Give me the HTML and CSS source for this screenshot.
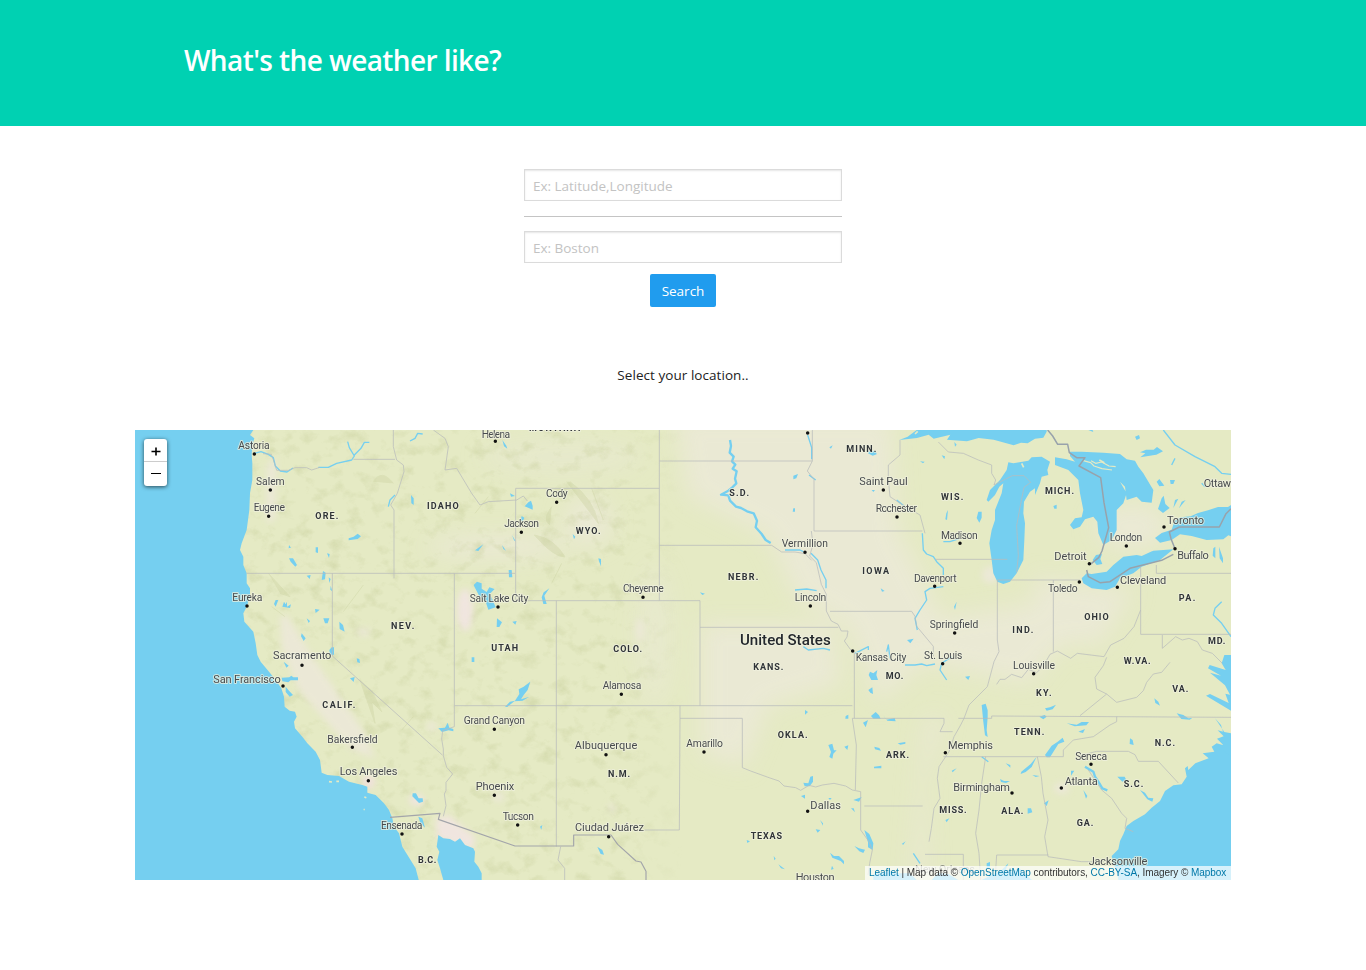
FILE: index.html
```html
<!DOCTYPE html>
<html lang="en">
<head>
<meta charset="utf-8">
<title>What's the weather like?</title>
<link rel="stylesheet" href="styles.css">
</head>
<body>
<header class="hero"><h1 class="title">What's the weather like?</h1></header>
<main>
<form class="search">
  <input class="input" type="text" placeholder="Ex: Latitude,Longitude" aria-label="Coordinates">
  <hr class="rule">
  <input class="input" type="text" placeholder="Ex: Boston" aria-label="City">
  <button class="button" type="button">Search</button>
</form>
<p class="status"><span>Select your location..</span></p>
<section class="map">
<svg class="canvas" viewBox="0 0 3288 1350" width="1096" height="450">
<defs>
<filter id="soft" x="-30%" y="-30%" width="160%" height="160%"><feGaussianBlur stdDeviation="32"/></filter>
<filter id="small" x="-30%" y="-30%" width="160%" height="160%"><feGaussianBlur stdDeviation="9"/></filter>
<filter id="relief" x="0" y="0" width="100%" height="100%" color-interpolation-filters="sRGB"><feTurbulence type="fractalNoise" baseFrequency=".019 .024" numOctaves="5" seed="21"/><feColorMatrix values="0 0 0 0 .76  0 0 0 0 .79  0 0 0 0 .58  2.6 0 0 0 -1.35"/></filter>
<linearGradient id="fade"><stop offset="0" stop-color="#fff"/><stop offset=".44" stop-color="#fff"/><stop offset=".5" stop-color="#000"/></linearGradient>
<mask id="west"><rect width="3288" height="1350" fill="url(#fade)"/></mask>
</defs>
<rect width="3288" height="1350" fill="#e5eac4"/>
<g fill="#eae9d4" filter="url(#soft)">
<path d="M1620-40H2270L2290 300L2420 560L2700 520L2820 600L2680 760L2370 700L2230 820L2140 590L1980 500L1900 320L1660 200Z"/>
<path d="M2700 440L3000 480L2900 640L2690 650Z"/><path d="M1700 580H2090L2120 760L1900 830L1830 1010L1700 970Z"/>
<ellipse cx="1560" cy="620" rx="50" ry="210" opacity=".6"/><ellipse cx="2990" cy="290" rx="110" ry="70"/>
<ellipse cx="1090" cy="350" rx="210" ry="35"/><ellipse cx="1360" cy="275" rx="70" ry="70"/>
<path d="M2370 860L2430 860L2370 1060L2380 1350H2330L2350 1050Z" opacity=".8"/><ellipse cx="1280" cy="80" rx="240" ry="50" opacity=".5"/>
</g>
<g mask="url(#west)"><rect width="3288" height="1350" filter="url(#relief)" opacity=".42"/></g>
<g fill="#ebe8d6" filter="url(#small)">
<path d="M435 560L455 555L540 690L690 910L720 985L650 960L490 780L440 650Z"/><path d="M395 105L425 80L420 270L395 280Z"/>
<ellipse cx="990" cy="540" rx="24" ry="64" fill="#f0e5df"/><path d="M903 1165L940 1155L1020 1220L1015 1260L905 1225Z" fill="#f0e5df"/>
<ellipse cx="700" cy="1055" rx="20" ry="22" fill="#f0e1dc"/><ellipse cx="845" cy="1110" rx="22" ry="18" fill="#f0e5df"/>
<ellipse cx="2565" cy="435" rx="24" ry="26"/><ellipse cx="1515" cy="600" rx="13" ry="36"/><ellipse cx="685" cy="606" rx="22" ry="12"/><ellipse cx="890" cy="890" rx="14" ry="14"/><ellipse cx="1090" cy="1100" rx="18" ry="15"/><ellipse cx="1431" cy="1135" rx="10" ry="14"/><ellipse cx="2780" cy="1075" rx="24" ry="18"/>
</g>
<g class="ridge">
<path d="M1305 155q70 50 85 125q-45-60-95-125M1198 315q60 10 92 66q-35 0-92-66M1250 230q-30 40-5 55M710 780l30 65l-30-30l10 65l-45-130M835 860l-35 40M715 155q25-40 60 5M400 430l65 70l-30-10M380 1010l60 45M1370 175l35 95M625 545l60-80M450 560l-40-30M1060 200l-40 50M1280 400l-30 60"/>
</g>
<g class="water">
<path d="M0 0H355l-10 15l13 10l-6 20l-2 30l2 25v50l-7 40l-2 50l-8 60l-15 40l-5 20l10 20v25l10 25v30l10 15v25l-10 30l-10 20l3 25l27 30l7 35l5 35l10 20l25 30l20 25l17 25l8 25l2 30l15 12l16 3l5 15l-8 15l3 20l22 25l15 20l25 25l13 25l5 38l17 7l35 3l30 17l40 10l15 5v18l25 7l25 25l15 20l10 25l5 25l15 20l10 40l40 65l13 50H0Z"/>
<path d="M910 1215l15 10l20 2l15 8l15-10l15 20l25 10l5 10l-2 30l12 15l10 20v20H925l-10-35l-8-25l6-25l-8-15Z"/>
<path d="M3288 960l-25-15l-18-5l-15 10l8 15l-35 5l18 15l-40 15l-21 20l-2-12l-8 7l5 25l-15 23l-25 3l-25 17l-15 30l-25 20l-20 20l-35 20l-20 15l-10 25l-10 20l-5 25l-20 20l5 25l10 20l10 50H3288Z"/>
<path d="M3288 675h-20l-8 25l12 20l-48-15l-5 10l39 22l-33-9l45 38l15 28l-14-3l10 28l-56-27l-12 5l75 45v-90Z"/>
<path d="M3240 865l18 20l6 20l24 5v70l-24-20l-30-8l30-8l-18-18l20-7l-18-18l20 5Z"/>
<!-- Great Lakes -->
<path d="M2293 30l25-10l27-20h390v5l-10 18l-25 3l-22 14l-20-2l-22 8l-60-17l-45-5l-35 10l-60-5l10-15l-50 12l-15-12l-35 10Z"/>
<path d="M2620 97l15 3l45-8l10-10l30-2l25 15l-8 25l3 15l-20 5l-5 20l-15 35v-20l-15 10l-18 30l-2 35l5 30l-2 50l-3 60l-20 40l-20 25l-20 7l-18-7l-12-25l-5-40l-7-50l7-40l10-30v-30l20-50l5-30l-12 10l-13 25l-20 20l-5-5l10-30l30-30l20-30Z"/>
<path d="M2760 82l35 6l25 7l-15-17v-13h35l65 3l50 4l20 16l25 4l10 18l15 20l30 50l-5 38l-30-3l-15-15l-30 10l-5-40l-15-15l20 35l-10 30l-20 20v60l-15 30l-25 15l-15-35l-3-35l-12-15l-25 8l-15 22l-20 8l-10-13l15-20l20-3l5-22l-10-50l-5-40l-30-30l-40-15Z"/>
<path d="M2840 445l15-15l15 2l45-7l20-20l30-25l40-5l15 3l35-16l60-4l-40 32l-55 20l-25 20l-40 15l-15 25l-25 10l-45-5l-25-15Z"/>
<path d="M2873 390l10-15l18-3l-5 15l6 15l-17 3Z"/>
<path d="M3060 324l20-15l30-10l9-27l18-10l30-3l22-10l30-8l30-10h30l9-6v94l-8-3l-15 12l-50 2l-45-12l-35-5l-25 17l-35 8Z"/>
<path d="M3015 67l18-8l23 0l10-8l18 13l-20 10l-48 8l15-12ZM3080 205l6-8l5 25l13 12l-20 15l-15-12ZM3120 210l10-4l-15 28ZM3140 215l12-5l-20 25ZM3065 155l8-8l15 20l-15 2ZM3235 355l6-5v35l-8-8ZM3252 350l12 35v15l-10-15ZM3000 20l12-5l3 10l-10 5ZM2530 245h10v18l-7 15l-8-14ZM2755 228l10-4v12h-7ZM3105 150h15l-5 12h-8ZM2860 0l12-2l3 8Z"/>
<!-- Western lakes -->
<path d="M1016 465l10-10l14 5v16l15 10l8-14l16 5l-15 15l10 20l8 20l-22 7l-8-24l-18-15l-15-28Z"/>
<path d="M1180 217l8-5l5 15v12l-12-5l-12-5ZM1125 190l15 8l-12 2ZM1102 30l12 17l3 9l-10-7ZM1160 258l8 5l-5 12l-6-5ZM1131 315l12 20l-6-4ZM1045 343l-15 20l-10-2ZM1101 345l12 17l-8-5ZM1121 420h9l2 22h-10ZM1236 480l7-5l-15 22l7 25h-10l-5-20l6-15ZM1086 565l15 12l-8 14h-8ZM1132 575l13-2l-4 11ZM1390 385l8 2v22l-6-15ZM1313 312l8 8l-4 8ZM828 195l8 10v20l-7-5Z"/>
<path d="M641 325l15-5l12-9l10 8l-10 8l-27 4ZM462 385l12 0l12 20l-5 5l-14-15ZM542 352h7v17l-7-2ZM576 370l8 2l-2 12ZM564 423l8 5l-2 20l-10 2ZM581 442l6 5l-4 12ZM587 467l5 17l-6-5ZM422 510l8 0l-8 20l-5-8ZM442 530l5-15l5 8l4-8v15l12-7l-3 11ZM613 575l11 10l5 20l-15-8ZM565 565h18l-5 15h-8ZM540 537l14 2l-12 10ZM500 610l12 15l-6 8l-8-14ZM583 660l7-8l7 0v22h-12ZM515 437l12-2l-3 12ZM515 565l10 8l-4 6ZM462 345l6 8l-7 2ZM665 685l8 2l2 12l-8-2ZM645 745l14-4l-3 15ZM446 695l15 12l-7 6ZM440 743l23-1l6-5l6 5l14 0v9h-22l-7 6l-18-3ZM452 770l10 12l12 13l-10 5l-12-14Z"/>
<path d="M833 1090l10 0l8 15h12l1 10l-12 4l-20-20ZM850 1160l12 5l8 28l-14-14ZM1387 1250l15 10l5 14l-10-2ZM1010 682h8v14h-8ZM1215 1190l7-5l-3 14ZM1110 830l15-15l15-3l13-20l-2-14l15-8l20-15l-8 25l-12 15l-8 13l25-8l-20 12l-25 2l-15 12l-6 5ZM910 895l20-2l8-15l5 15l12 4v7l-14-3l-20 5Z"/>
<path d="M2200 63h22l3 10l-12 4l-14-7ZM1975 137l14-5l-5 13l-9 3ZM1975 235l5 0v10h-7ZM2355 94l14 1l-5 5ZM2420 76l10 3l-2 9ZM2434 250l5-10l-3 30l-5-2ZM2210 180h10l-5 6ZM2083 52l10-6l-5 10ZM1695 487l15 4l-8 4ZM2237 475l12 8l-8 2ZM2316 630l20-4l-10 14ZM2465 515l-5 25l-3-10ZM2458 36l7 8l-5 6Z"/>
<!-- Southern lakes -->
<path d="M2205 725l10 5l12-10l-3 15l5 15h-20l-8-15ZM2200 780l12-8l2 20l-8-4ZM2010 840l9 6l-9 8ZM2132 858l8-4v12h-9ZM2208 858l14-12l10 10l5 10h-22ZM2244 855l10 14l25-5l3 10l-25-2ZM2184 878l15-8l-7 22ZM2080 945l12-4l5 20l8 0l-10 10l-3 15l-9-5l5-15ZM2128 950l12-4l-3 14ZM2218 950l15 4l5 8l-18-4ZM2288 940l23-4v5l-15 3ZM2217 1010l22-3v8h-22ZM2005 1058l15 2l6-20l8-2v17l-10 14h-15ZM1998 1098l12-4v12ZM2155 1110l15-5l10-4l-8 14ZM2148 1135l8 0l4 12ZM2055 1170l9 10v7ZM2042 1198l14 2l-8 8ZM2098 1180l4 17ZM2188 1200l15 12l12 28l-2 20l-14-8v-15ZM2158 1248l14 7l18 4l-5 10l-12-5ZM2085 1268l12 10l15 0l15 15v10l-10-10l-25-10ZM1835 1230l10 4l-8 5ZM1916 1278l6 8l-4 5ZM1930 1303l20 15l-12-3ZM2091 1307l5 10l-8 2ZM2300 1242l12-8l-7 10ZM2450 1022l15-7l-12 12ZM2431 1170l12-5l-8 12ZM2080 1104l10 0l-5 6Z"/>
<path d="M2540 825l12-4l6 20v20l-3 40l3 20l-8-5l-5-40ZM2730 835l15-3l18-8l-10 14l-18 4ZM2713 860l16-5l6 5l-10 8ZM2730 975l20-28l18-12l15-12l5 12l-18 7l-25 40l-10 0ZM2795 880l30 4l15-8l22 0l-8 10l-35 3ZM2830 905l20-8l-6 12ZM2985 925l8 5l3 15l-12-3ZM3058 805l12 10l5 12l-14-8ZM3125 850l20 5l15 10l12-1l-8 5l-25-2ZM2705 980l-18 22l-28 23l-2 7l15-6l18-15ZM2612 1000l14 5l0 8ZM2595 1047l12 6l18 0l-12 6l-15-3ZM2692 1035l22 3l-12 3ZM2678 1135l10 0l4 12l-14 4ZM2808 1022l10 0l-10 15ZM2845 1080l12 18l-4 8ZM2947 1040h22l5 10l-12 5ZM3015 1080l15 8l10 15l15 2l-3 10l-15-7ZM2727 1120l14-9l-6 17ZM2555 1300l10-4v16l-10 4ZM2490 740l15-2l-5 12ZM2540 1350l60-30l20-20l-8 20l20 5l20-12l14 16l25 21ZM2345 1350l-20-20l-40 0l-20-8l-50 10v18ZM2390 1350l20-22l30 4l30 18Z"/>
</g>
<g class="islands"><path d="M582 1055l9 1M604 1054l8 0M688 1101l6 2M686 1138l3 1M2755 133l12-6M2893 90l15 8M2660 100l6 12M2340 12l8-8"/><path class="broad" d="M2845 92l22 6l10 10l24 8l30 4M2868 92l14 8l18-4l22 12l20 2"/></g>
<g class="river">
<path d="M358 70l20-5l22 8l15 10l6 25l15 15l20 3l18-12M550 112l30 0l25-12l45-10l8-12l-15-25l-5-18M658 75l20-20l10-18l15 0M760 230l5-20l15-15M825 33l15-8l8-15l15 2M2018 15l12 38v35M2022 135l20 15M1950 360h45l10 5M2028 370l20 20l10 30l15 30v25M1980 480l35-3l30 5M2362 310l3 50l10 12l20 8l10 15l20 20l0 20M2425 470l-40 5l-15 10l5 25l-20 30l-15 25l7 35M2425 335h20l30-10M2285 210l25 20l15 15M2310 705h30l20-3l15 5l25-5M2450 680l-30 20l-5 20l20 30M2005 650l15 10l45-5l20 5M2160 670l40-20l0 10M2255 665l5-20l5 40M3085 0l35 45l60 35l60 30l20 20l28 3M3260 515l-20 20l-5 20l25 25l28 40M2540 980l20 15M2335 1270l20 30M3120 85l-10 20M3200 160l10 10"/>
<path class="wide" d="M1785 30l3 18l-4 20l12 12l-5 14l10 10l-8 12l12 8l-5 22l4 14l-12 12l-12 10l-22 12l22 2l5 16l18 18l15 4l18 10l20 6l10 22l-4 20l18 20l12 18l15 9M2850 1010l25 15l5 15l10 15l12 20l15 6"/>
</g>
<g class="border">
<path d="M775 0v50l10 40l20 15l2 20l-20 65l-20 35l10 15v205M655 88h125M555 112l-25 8l-15-7l-35 0l-20 8l-35 0l-6-20l-10-28l-25-2M335 430H1140M592 430v245l0 3L922 975M958 430v460l-35 12l-3 25l5 30v20l10 35l18 20l-20 25v25l-5 10l5 35l-8 32M1142 512V175H1573M1573 0V512M1142 512H1695V592H2110M1264 512V1250M959 827H2152M895 0l35 25l10 25l-10 70l35-5l45 75l25 35l25-10l85-5l20-12l12 15M1573 93H2032V0M1573 346H1910l30 20l40 0l30 5l20 20M2032 93l-15 30l20 25v155H2362M2029 303l5 40l-10 35l20 20l15 65l15 30v50l15 30l20 10l10 20l20 0l-3 18l-8 12l18 25l12 10V865M2085 544H2330l10 15l5 30l50 60v30M2295 30v45l-35 30l0 45l5 50l30 20l60 35l15 55M2400 388H2617M2587 450V630l5 35l-15 30l-20 75l-25 25l-30 30l-15 40l-10 20l-20 35l-15 45l-30 45l-5 35l8 60l-18 30l-8 60l-7 40M2587 450H2755V665M2755 450h80M3017 405V613H3288M3064 405v25h224M3017 540l-20 50l-30 35l-40 20l-20 35l-80-10l-20 15l-40-22l-22 10l-20 35l-20 20l-25-10l-20 25l-30-10l-20 15l-15 0l-10 15M2470 865L2570 865v-7L3288 862M1695 592V827M1635 827V865H1822V1013l25 10l55 20l30 10l15 15l35 5l15 8l25-15l20 5l20-6l35-5l35 8l20 12l25 5v115l25 35l10 25l-8 40l-5 35M2152 865h275v15l-12 25h38M2152 865l12 80l-3 135M2188 1128h175M2425 980H2785v-20l30-30l60-10l50-35l20-10v-15M2552 980l-12 80l-8 80l-10 70l10 60l5 80M2707 980l12 60l5 50l15 80l-10 50l10 60l100 15h70M2585 1275h155M2585 1275l-5 75M2370 1273h115v77M2835 977l50-13h95l20 10l10 20l60 0l60 65M2860 1020l40 60l30 25l30 45l15 15l-5 30l25 10M2835 857l80-65l-30-15l-5-35l25-35l10-25M2915 792l30 25l60-15l20-20l10-25l20-25l25-5l25-30M3082 615v40l40-35l20 10l20-5l25 10l15 25l30 10l30 30M2410 36l30 30l45 4l45 20l40 15v25l12 20l-5 15l35-18l20-10l35 0l20 20l-20 15l-12 60l-10 55l5 90l-5 50M1277 1250l-8 40l20 25v35M1635 865l-2 335h-105"/>
</g>
<g class="national"><path d="M765 1162l150-12l-5 18l230 80H1316v-33H1428l20 28l55 50l15 3l15 28v30"/><path class="lakeline" d="M2738 0l15 18l15 25l30 0l5 25l22 15l25 0l-18 25l65 35l10 75l14 75l-20 70l-10 20l-25 20M2855 420l5 20l35 18l30-3l60-40l95-24l35-18M3120 356l-12-30l-5-20l30-15h120l20-40l15-15"/></g>
<g class="dots"><path d="M358 72h0M406 180h0M401 259h0M336 528h0M1081 34h0M1265 217h0M1159 307h0M1089 531h0M1524 502h0M2018 9h0M2245 180h0M2286 261h0M2010 367h0M2399 469h0M2026 528h0M2459 609h0M2153 663h0M2475 340h0M2974 348h0M2863 401h0M2833 456h0M2947 472h0M3087 291h0M3120 356h0M501 706h0M444 768h0M652 952h0M700 1052h0M801 1212h0M1459 793h0M1078 898h0M1413 974h0M1078 1096h0M1148 1185h0M1421 1220h0M1707 966h0M2018 1144h0M2423 701h0M2431 968h0M2696 731h0M2868 1003h0M2779 1074h0M2631 1089h0"/></g>
<g class="city">
<text x="310" y="56" textLength="94">Astoria</text><text x="363" y="166" textLength="86">Salem</text><text x="356" y="243" textLength="94">Eugene</text><text x="292" y="514" textLength="90">Eureka</text>
<text x="1040" y="23" textLength="85">Helena</text><text x="1233" y="202" textLength="65">Cody</text><text x="1108" y="292" textLength="104">Jackson</text><text x="1004" y="517" textLength="176">Salt Lake City</text><text x="1464" y="487" textLength="122">Cheyenne</text>
<text class="big" x="2173" y="164" textLength="145">Saint Paul</text><text x="2222" y="246" textLength="124">Rochester</text><text x="1940" y="351" textLength="139">Vermillion</text><text x="2337" y="456" textLength="128">Davenport</text><text x="1979" y="514" textLength="95">Lincoln</text><text x="2384" y="594" textLength="146">Springfield</text><text x="2418" y="326" textLength="110">Madison</text>
<text x="2924" y="334" textLength="98">London</text><text class="big" x="2758" y="391" textLength="97">Detroit</text><text x="2739" y="486" textLength="89">Toledo</text><text class="big" x="2955" y="461" textLength="139">Cleveland</text><text class="big" x="3096" y="281" textLength="111">Toronto</text><text class="big" x="3127" y="386" textLength="94">Buffalo</text><text class="big" x="3206" y="170" textLength="82">Ottaw</text>
<text class="big" x="414" y="688" textLength="175">Sacramento</text><text class="big" x="235" y="758" textLength="202">San Francisco</text><text x="577" y="938" textLength="151">Bakersfield</text><text class="big" x="614" y="1035" textLength="173">Los Angeles</text><text x="738" y="1198" textLength="124">Ensenada</text>
<text x="1403" y="777" textLength="116">Alamosa</text><text x="986" y="883" textLength="184">Grand Canyon</text><text class="big" x="1319" y="957" textLength="188">Albuquerque</text><text class="big" x="1022" y="1079" textLength="116">Phoenix</text><text x="1103" y="1171" textLength="94">Tucson</text><text class="big" x="1320" y="1204" textLength="207">Ciudad Juárez</text>
<text x="1654" y="951" textLength="110">Amarillo</text><text class="big" x="2026" y="1136" textLength="92">Dallas</text><text class="big" x="1982" y="1352" textLength="117">Houston</text><text x="2162" y="693" textLength="152">Kansas City</text><text x="2367" y="687" textLength="115">St. Louis</text><text class="big" x="2439" y="958" textLength="135">Memphis</text>
<text x="2634" y="717" textLength="126">Louisville</text><text x="2821" y="990" textLength="95">Seneca</text><text class="big" x="2789" y="1065" textLength="99">Atlanta</text><text class="big" x="2455" y="1083" textLength="170">Birmingham</text><text class="big" x="2861" y="1305" textLength="176">Jacksonville</text><text class="big faint" x="2340" y="1328" textLength="180">New Orleans</text>
<text x="1975" y="-5" textLength="75">Fargo</text>
</g>
<g class="state">
<text x="1182" y="2" textLength="153">MONTANA</text>
<text x="541" y="268" textLength="69">ORE.</text><text x="768" y="596" textLength="70">NEV.</text><text x="876" y="238" textLength="95">IDAHO</text><text x="1322" y="311" textLength="75">WYO.</text><text x="1069" y="662" textLength="80">UTAH</text><text x="1435" y="667" textLength="86">COLO.</text>
<text x="1783" y="197" textLength="59">S.D.</text><text x="2134" y="67" textLength="90">MINN.</text><text x="2418" y="210" textLength="67">WIS.</text><text x="1779" y="451" textLength="91">NEBR.</text><text x="2182" y="433" textLength="80">IOWA</text><text x="2730" y="191" textLength="87">MICH.</text><text x="2848" y="569" textLength="73">OHIO</text><text x="2632" y="609" textLength="63">IND.</text><text x="3131" y="514" textLength="50">PA.</text><text x="3219" y="643" textLength="52">MD.</text>
<text x="562" y="833" textLength="99">CALIF.</text><text x="1419" y="1041" textLength="66">N.M.</text><text x="849" y="1299" textLength="55">B.C.</text><text x="1855" y="719" textLength="90">KANS.</text><text x="2252" y="746" textLength="53">MO.</text><text x="1928" y="923" textLength="90">OKLA.</text><text x="2253" y="983" textLength="69">ARK.</text><text x="1847" y="1226" textLength="94">TEXAS</text><text x="2413" y="1149" textLength="82">MISS.</text>
<text x="2966" y="702" textLength="81">W.VA.</text><text x="2703" y="797" textLength="47">KY.</text><text x="3112" y="786" textLength="48">VA.</text><text x="2637" y="916" textLength="91">TENN.</text><text x="3059" y="949" textLength="61">N.C.</text><text x="2966" y="1071" textLength="59">S.C.</text><text x="2599" y="1151" textLength="66">ALA.</text><text x="2825" y="1188" textLength="50">GA.</text>
</g>
<text class="country" x="1815" y="646" textLength="272" lengthAdjust="spacingAndGlyphs">United States</text>
</svg>
<div class="zoom"><button class="step" type="button" aria-label="Zoom in"><svg width="10" height="10" viewBox="0 0 10 10"><path d="M.5 5.5h9M5 1.5v8"/></svg></button><button class="step" type="button" aria-label="Zoom out"><svg width="10" height="10" viewBox="0 0 10 10"><path class="thin" d="M0 4.5h10"/></svg></button></div>
<div class="credit"><a>Leaflet</a> | Map data © <a>OpenStreetMap</a> contributors, <a>CC-BY-SA</a>, Imagery © <a>Mapbox</a></div>
</section>
</main>
</body>
</html>
```

FILE: styles.css
```css
*{box-sizing:border-box}
body{margin:0;min-height:970px;background:#fff;color:#222;font-family:"Open Sans","Noto Sans",sans-serif}
.hero{height:126px;background:#00d1b2;padding:39px 184px 0}
.title{margin:0;color:#fff;font-size:28px;line-height:42px;font-weight:600;letter-spacing:-.6px;white-space:nowrap}
.search{width:318px;margin:43px auto 0;display:flex;flex-direction:column;align-items:center}
.input{width:318px;height:32px;padding:2px 8px 0;border:1px solid #dbdbdb;border-radius:0;background:#fff;box-shadow:inset 0 1px 2px rgba(10,10,10,.1);font:13.5px "Open Sans",sans-serif;letter-spacing:-.02px;color:#333}
.input::placeholder{color:#c3c3c3;opacity:1}
.rule{width:318px;height:1px;border:0;background:#c4c4c4;margin:15px 0 14px}
.button{width:66px;height:33px;margin-top:11px;padding:0;border:0;border-radius:2px;background:#209cee;color:#fff;font:13.5px "Open Sans",sans-serif}
.status{margin:58px 0 0;height:20px;text-align:center;font-size:13.5px;line-height:20px;letter-spacing:.05px}
.map{position:relative;width:1096px;height:450px;margin:45px auto 0;overflow:hidden}
.canvas{display:block}
.water,.islands{stroke-linejoin:round}
.water{fill:#75cff0}
.islands{fill:none;stroke:#e5eac4;stroke-width:5}
.islands .broad{stroke-width:3.5}
.ridge{fill:#c8cf9d;stroke:#c8cf9d;stroke-width:3;opacity:.35}
.river{fill:none;stroke:#75cff0;stroke-width:4;stroke-linejoin:round}
.wide{stroke-width:7}
.border{fill:none;stroke:#b9bbbb;stroke-width:2.8;opacity:.8;stroke-linejoin:round}
.national{fill:none;stroke:#a3a5aa;stroke-width:3.5;stroke-linejoin:round}
.lakeline{stroke:#98a2ab;stroke-width:4.5}
.dots{fill:none;stroke:#111;stroke-width:10.5;stroke-linecap:round}
.city text,.state text,.country{paint-order:stroke;stroke:#f0f1dfb8;stroke-width:6;stroke-linejoin:round}
.city{font:31px Roboto,sans-serif;fill:#484b4e}
.city .big{font-size:33px}
.city .faint{opacity:.55}
.state{font:700 27px Roboto,sans-serif;fill:#303438}
.country{font:500 46px Roboto,sans-serif;fill:#24282d}
.zoom{position:absolute;left:9px;top:9px;width:23px;border-radius:3px;background:#fff;box-shadow:0 1px 4px rgba(0,0,0,.65)}
.step{display:flex;align-items:center;justify-content:center;width:23px;height:24px;padding:0;border:0;background:none}
.step:first-child{height:23px;border-bottom:1px solid #ccc;padding-top:1px}
.step path{stroke:#000;stroke-width:1.6;fill:none}
.step .thin{stroke-width:1}
.credit{position:absolute;right:0;bottom:0;width:366px;height:14px;padding:0 4px;background:rgba(255,255,255,.7);font:10px/14px "Liberation Sans",Arial,sans-serif;letter-spacing:-.05px;color:#333;white-space:nowrap}
.credit a{color:#0078a8}
```
